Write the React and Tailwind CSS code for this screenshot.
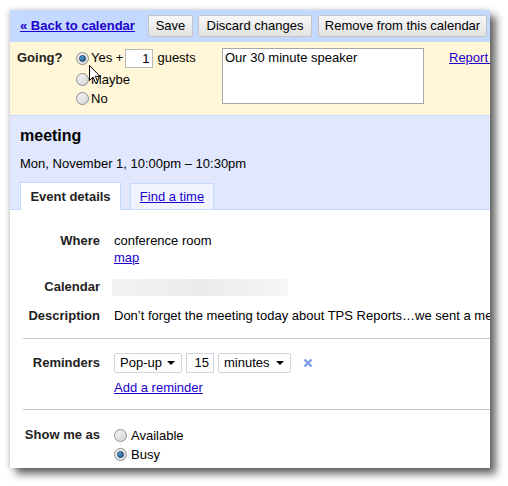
import React from "react";

const FONT = { fontFamily: '"Liberation Sans", Arial, sans-serif' };

const Radio = ({ checked }) => (
  <span className="relative inline-flex w-[13px] h-[13px] rounded-full border border-[#8e8f8f] bg-gradient-to-br from-[#f4f4f4] to-[#d6d6d6] items-center justify-center shrink-0">
    {checked && (
      <span className="w-[7px] h-[7px] rounded-full bg-gradient-to-br from-[#5fb5f0] to-[#1c4d7c] border border-[#1f3f63]" />
    )}
  </span>
);

const Button = ({ children, className = "" }) => (
  <button
    className={`h-[22px] shrink-0 whitespace-nowrap text-[13px] text-black border border-[#c4c4c4] rounded-[2px] bg-gradient-to-b from-[#f8f8f8] to-[#e2e2e2] ${className}`}
  >
    {children}
  </button>
);

const Select = ({ label, width }) => (
  <div
    className={`h-[20px] ${width} shrink-0 border border-[#cfd6e0] rounded-[2px] bg-white flex items-center justify-between pl-[5px] pr-[6px] text-[13px]`}
  >
    <span>{label}</span>
    <span className="w-0 h-0 border-l-[4px] border-r-[4px] border-t-[4px] border-l-transparent border-r-transparent border-t-black" />
  </div>
);

const Row = ({ label, children, className = "" }) => (
  <div className={`flex ${className}`}>
    <div className="w-[90px] shrink-0 text-right font-bold text-[13px] leading-[16px] text-[#222]">{label}</div>
    <div className="ml-[14px] flex-1 min-w-0">{children}</div>
  </div>
);

const linkCls = "text-[#2200cc] underline";

export default function App() {
  return (
    <div className="w-[508px] h-[486px] bg-white pt-[10px] pl-[10px] leading-[16px]" style={FONT}>
      <div className="relative w-[480px] h-[458px] bg-white overflow-hidden text-[13px] text-black shadow-[6px_6px_8px_rgba(0,0,0,0.6),-1px_0_5px_rgba(0,0,0,0.2)]">
        {/* top bar */}
        <div className="h-[32px] bg-[#c3d9ff] flex items-center pl-[10px]">
          <div className="w-[128px] shrink-0">
            <a className="font-bold text-[#2200cc] underline text-[13px] whitespace-nowrap">« Back to calendar</a>
          </div>
          <Button className="w-[45px]">Save</Button>
          <Button className="ml-[5px] w-[114px]">Discard changes</Button>
          <Button className="ml-[6px] w-[169px]">Remove from this calendar</Button>
        </div>

        {/* going section */}
        <div className="h-[73px] bg-[#fff7d7] flex pt-[6px]">
          <div className="w-[66px] shrink-0 pl-[7px] font-bold leading-[20px] text-[#222]">Going?</div>
          <div className="w-[146px] shrink-0">
            <div className="h-[20px] flex items-center">
              <Radio checked />
              <span className="ml-[2px]">Yes +</span>
              <span className="ml-[2px] w-[28px] h-[19px] border border-[#b9b9b9] bg-white text-right pr-[3px] leading-[17px]">1</span>
              <span className="ml-[4px]">guests</span>
            </div>
            <div className="h-[19px] mt-[2px] flex items-center">
              <Radio />
              <span className="ml-[2px]">Maybe</span>
            </div>
            <div className="h-[19px] flex items-center">
              <Radio />
              <span className="ml-[2px]">No</span>
            </div>
          </div>
          <div className="w-[202px] h-[56px] border border-[#a8a8a8] bg-white px-[2px] pt-[1px] leading-[16px] shrink-0">
            Our 30 minute speaker
          </div>
          <a className={`${linkCls} ml-[25px] leading-[20px] whitespace-nowrap shrink-0`}>Report spam</a>
        </div>

        {/* event header */}
        <div className="border-t border-b border-[#c3d9ff] bg-[#e1e8fe] pt-[10px] pl-[10px]">
          <div className="text-[16px] font-bold leading-[20px]">meeting</div>
          <div className="mt-[10px] leading-[16px]">Mon, November 1, 10:00pm – 10:30pm</div>
          <div className="mt-[10px] flex -mb-px h-[28px]">
            <div className="w-[101px] h-full bg-white border border-b-0 border-[#c3d9ff] flex items-center justify-center font-bold text-[#222]">
              Event details
            </div>
            <div className="ml-[9px] w-[84px] h-[27px] mt-[1px] bg-[#f0f4ff] border border-[#c3d9ff] flex items-center justify-center">
              <a className={linkCls}>Find a time</a>
            </div>
          </div>
        </div>

        {/* details */}
        <div className="pt-[23px]">
          <Row label="Where">
            <div>conference room</div>
            <a className={`${linkCls} block mt-px`}>map</a>
          </Row>
          <Row label="Calendar" className="mt-[13px]">
            <div className="-ml-[2px] w-[176px] h-[17px] bg-gradient-to-r from-[#f3f3f3] via-[#ebebeb] to-[#f6f6f6]" />
          </Row>
          <Row label="Description" className="mt-[12px]">
            <div className="whitespace-nowrap">
              Don’t forget the meeting today about TPS Reports…we sent a memo
            </div>
          </Row>
          <div className="ml-[13px] mt-[14px] h-px bg-[#c9c9c9]" />
          <Row label="Reminders" className="mt-[14px] items-center">
            <div className="flex items-center h-[20px]">
              <Select label="Pop-up" width="w-[68px]" />
              <span className="ml-[4px] w-[28px] h-[20px] shrink-0 border border-[#cfd6e0] text-right pr-[4px] leading-[18px]">15</span>
              <span className="ml-[4px]"><Select label="minutes" width="w-[73px]" /></span>
              <svg className="ml-[12px] shrink-0" width="10" height="10" viewBox="0 0 10 10">
                <path d="M1.5 1.5 L8.5 8.5 M8.5 1.5 L1.5 8.5" stroke="#7a9be6" strokeWidth="2.4" />
              </svg>
            </div>
          </Row>
          <Row label="" className="mt-[7px]">
            <a className={linkCls}>Add a reminder</a>
          </Row>
          <div className="ml-[13px] mt-[13px] h-px bg-[#c9c9c9]" />
          <Row label="Show me as" className="mt-[17px]">
            <div className="flex items-center h-[19px] -mt-[1px]">
              <Radio />
              <span className="ml-[4px]">Available</span>
            </div>
            <div className="flex items-center h-[19px]">
              <Radio checked />
              <span className="ml-[4px]">Busy</span>
            </div>
          </Row>
        </div>

        {/* mouse pointer */}
        <svg className="absolute left-[79px] top-[55px]" width="13" height="20" viewBox="0 0 13 20">
          <path d="M0.5 0.5 L0.5 15.5 L4 12 L6.5 18 L8.8 17 L6.3 11.3 L11 11.3 Z" fill="white" stroke="black" strokeWidth="1" />
        </svg>
      </div>
    </div>
  );
}
